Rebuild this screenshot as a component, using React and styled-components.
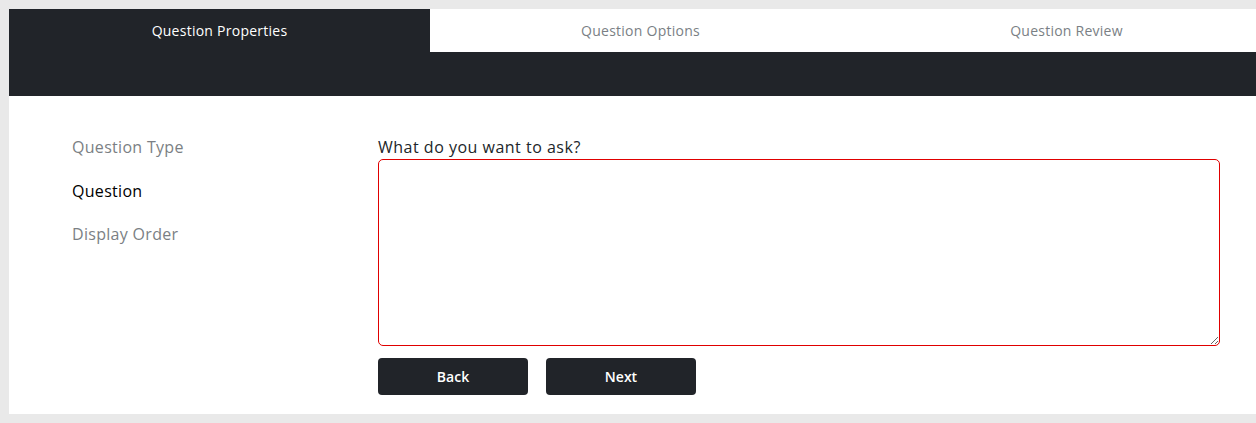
import React, { useState } from 'react';
import styled, { createGlobalStyle } from 'styled-components';

const GlobalStyle = createGlobalStyle`
  html, body {
    margin: 0;
    padding: 0;
    background: #e9e9e9;
    overflow: hidden;
    font-family: "Open Sans", "Liberation Sans", sans-serif;
  }
`;

const Page = styled.div`
  padding: 9px 0 10px 9px;
`;

const Card = styled.div`
  width: 1273px;
  background: #fff;
`;

const Tabs = styled.nav`
  display: grid;
  grid-template-columns: 421px 421px 1fr;
  background: #fff;
`;

const Tab = styled.div`
  height: 43px;
  display: flex;
  align-items: center;
  justify-content: center;
  font-size: 14px;
  letter-spacing: 0.25px;
  font-weight: ${p => (p.$active ? 500 : 400)};
  color: ${p => (p.$active ? '#fff' : '#7a7f85')};
  background: ${p => (p.$active ? '#212429' : '#fff')};
`;

const Band = styled.div`
  height: 44px;
  background: #212429;
`;

const Body = styled.div`
  display: grid;
  grid-template-columns: 306px 1fr;
  padding: 39px 62px 19px 63px;
`;

const SideNav = styled.ul`
  list-style: none;
  margin: 0;
  padding: 0;
  display: flex;
  flex-direction: column;
  gap: 19.5px;
`;

const SideItem = styled.li`
  font-size: 16px;
  line-height: 24px;
  letter-spacing: 0.3px;
  color: ${p => (p.$active ? '#000' : '#7b7f84')};
`;

const Form = styled.div`
  display: flex;
  flex-direction: column;
`;

const Label = styled.label`
  font-size: 16px;
  line-height: 24px;
  letter-spacing: 0.5px;
  color: #212529;
`;

const TextArea = styled.textarea`
  box-sizing: border-box;
  width: 100%;
  height: 187px;
  border: 1px solid #e00000;
  border-radius: 5px;
  padding: 6px 10px;
  font: inherit;
  outline: none;
  resize: vertical;
`;

const Actions = styled.div`
  display: flex;
  gap: 18px;
  margin-top: 12px;
`;

const Button = styled.button`
  width: 150px;
  height: 37px;
  border: none;
  border-radius: 4px;
  background: #212429;
  color: #fff;
  font-family: inherit;
  font-size: 14px;
  font-weight: 600;
  cursor: pointer;
`;

const steps = ['Question Properties', 'Question Options', 'Question Review'];
const sections = ['Question Type', 'Question', 'Display Order'];

export default function App() {
  const [text, setText] = useState('');

  return (
    <Page>
      <GlobalStyle />
      <Card>
        <Tabs>
          {steps.map((s, i) => (
            <Tab key={s} $active={i === 0}>{s}</Tab>
          ))}
        </Tabs>
        <Band />
        <Body>
          <SideNav>
            {sections.map(s => (
              <SideItem key={s} $active={s === 'Question'}>{s}</SideItem>
            ))}
          </SideNav>
          <Form>
            <Label htmlFor="question">What do you want to ask?</Label>
            <TextArea id="question" value={text} onChange={e => setText(e.target.value)} />
            <Actions>
              <Button>Back</Button>
              <Button>Next</Button>
            </Actions>
          </Form>
        </Body>
      </Card>
    </Page>
  );
}
